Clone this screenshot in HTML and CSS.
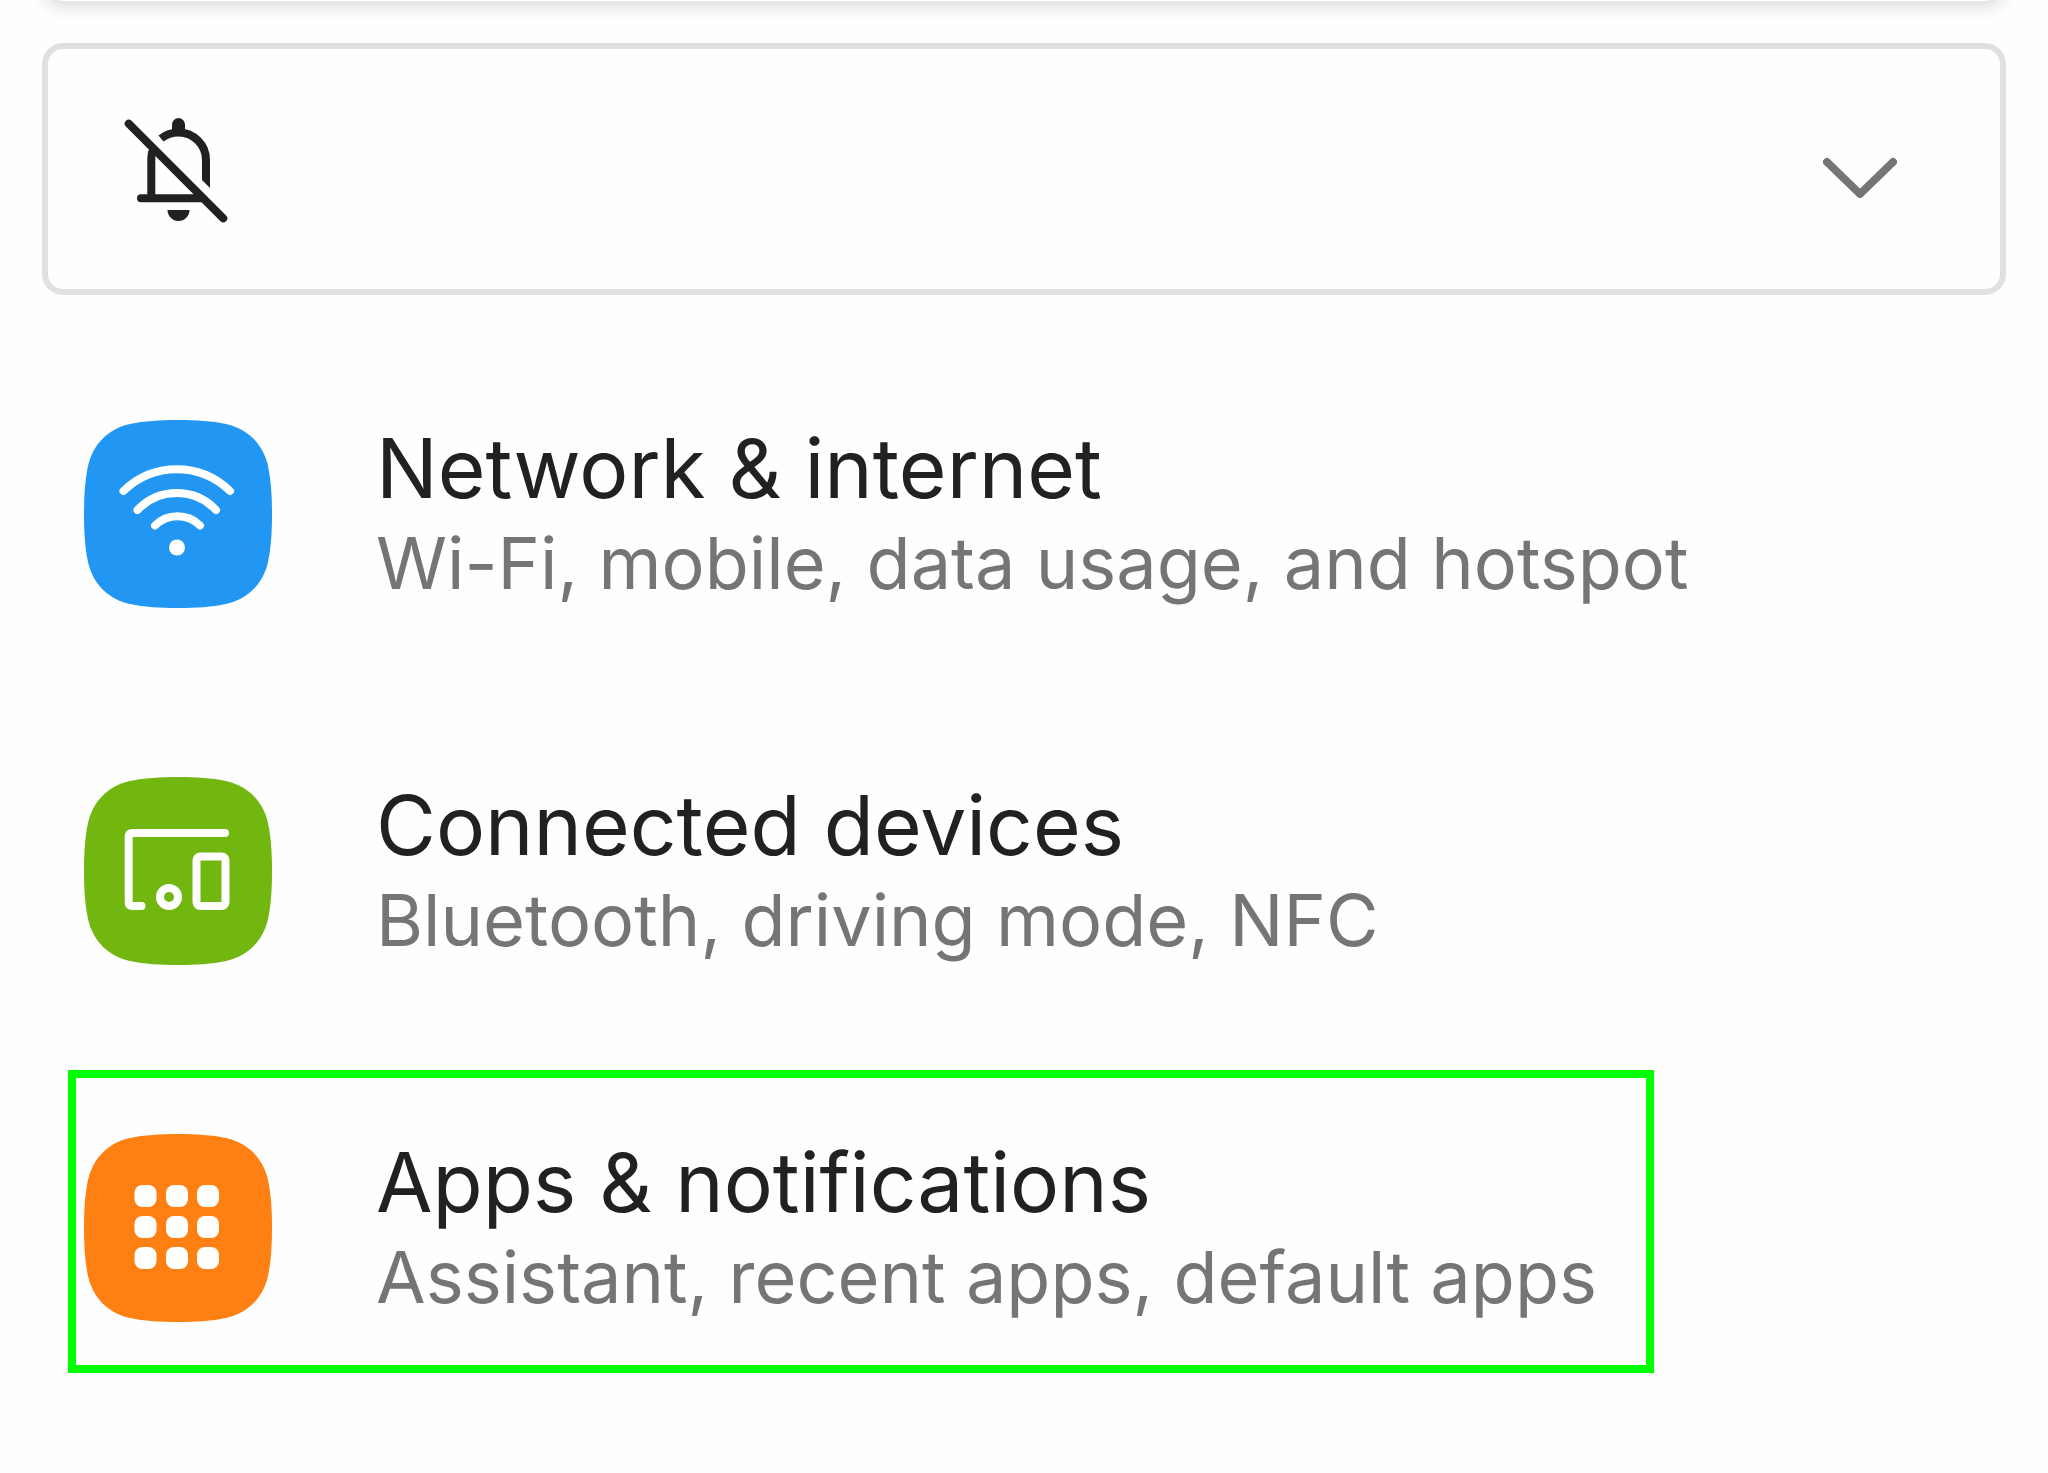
FILE: index.html
```html
<!DOCTYPE html>
<html lang="en">
<head>
<meta charset="utf-8">
<meta name="viewport" content="width=device-width, initial-scale=1">
<title>Settings</title>
<link rel="stylesheet" href="styles.css">
</head>
<body>
<main class="settings">
  <div class="search-card"></div>
  <button class="dnd-card" type="button" aria-label="Do not disturb" aria-expanded="false">
    <svg class="bell" viewBox="120 113 112 112" aria-hidden="true">
      <path class="bell-fill" d="M172 133V124.500a6.500 6.500 0 0 1 13 0V133zM167.500 210h22a11 11 0 0 1-22 0z"/>
      <path class="bell-line" d="M151.300 197V158q0-5 2-9M161 138.500C166 134.500 172 132.500 178.500 132.500C194 132.500 206 145 206 160V178"/>
      <path class="bell-fill" d="M202 176h8v12l-8-8z"/>
      <path class="bell-line round" d="M141 198.300H201M128.700 123.700L223.300 218.300"/>
    </svg>
    <svg class="chevron" viewBox="0 0 74 60" aria-hidden="true"><path d="M4 23L37 55L70 23"/></svg>
  </button>

  <ul class="list">
    <li class="item">
      <a class="row" href="#network">
        <svg class="icon network" viewBox="0 0 188 188" aria-hidden="true">
          <path class="tile" d="M0 94C0 76 1 60 4 46C9 24 24 9 46 4C60 1 76 0 94 0S128 1 142 4C164 9 179 24 184 46C187 60 188 76 188 94S187 128 184 142C179 164 164 179 142 184C128 187 112 188 94 188S60 187 46 184C24 179 9 164 4 142C1 128 0 112 0 94Z"/>
          <path class="glyph" d="M39.500 71A76 76 0 0 1 146 71M53.500 90A54 54 0 0 1 132 90M71 105.500A32 32 0 0 1 116 105.500"/>
          <circle class="solid" cx="93" cy="127.500" r="8"/>
        </svg>
        <span class="text">
          <span class="title">Network &amp; internet</span>
          <span class="summary">Wi-Fi, mobile, data usage, and hotspot</span>
        </span>
      </a>
    </li>
    <li class="item">
      <a class="row" href="#devices">
        <svg class="icon devices" viewBox="0 0 188 188" aria-hidden="true">
          <path class="tile" d="M0 94C0 76 1 60 4 46C9 24 24 9 46 4C60 1 76 0 94 0S128 1 142 4C164 9 179 24 184 46C187 60 188 76 188 94S187 128 184 142C179 164 164 179 142 184C128 187 112 188 94 188S60 187 46 184C24 179 9 164 4 142C1 128 0 112 0 94Z"/>
          <path class="glyph" d="M141 56H48.500Q44.700 56 44.700 60V125Q44.700 129 48.500 129H57.500"/>
          <rect class="glyph" x="112.500" y="79.500" width="29" height="49.500" rx="4"/>
          <circle class="glyph" cx="85" cy="120" r="9"/>
        </svg>
        <span class="text">
          <span class="title">Connected devices</span>
          <span class="summary">Bluetooth, driving mode, NFC</span>
        </span>
      </a>
    </li>
    <li class="item highlighted">
      <a class="row" href="#apps">
        <svg class="icon apps" viewBox="0 0 188 188" aria-hidden="true">
          <path class="tile" d="M0 94C0 76 1 60 4 46C9 24 24 9 46 4C60 1 76 0 94 0S128 1 142 4C164 9 179 24 184 46C187 60 188 76 188 94S187 128 184 142C179 164 164 179 142 184C128 187 112 188 94 188S60 187 46 184C24 179 9 164 4 142C1 128 0 112 0 94Z"/>
          <g class="solid">
            <rect x="50.500" y="51" width="22" height="22" rx="8"/><rect x="82" y="51" width="22" height="22" rx="8"/><rect x="113" y="51" width="22" height="22" rx="8"/>
            <rect x="50.500" y="82" width="22" height="22" rx="8"/><rect x="82" y="82" width="22" height="22" rx="8"/><rect x="113" y="82" width="22" height="22" rx="8"/>
            <rect x="50.500" y="113" width="22" height="22" rx="8"/><rect x="82" y="113" width="22" height="22" rx="8"/><rect x="113" y="113" width="22" height="22" rx="8"/>
          </g>
        </svg>
        <span class="text">
          <span class="title">Apps &amp; notifications</span>
          <span class="summary">Assistant, recent apps, default apps</span>
        </span>
      </a>
    </li>
  </ul>
</main>
</body>
</html>
```
FILE: styles.css
```css
*,
*::after {
  box-sizing: border-box;
}

body {
  margin: 0;
  background: #fefefe;
  color: #212121;
  font-family: Inter, Roboto, sans-serif;
}

.settings {
  display: flex;
  flex-direction: column;
  padding: 0 42px;
  overflow: hidden;
}

.search-card {
  height: 48px;
  margin-top: -44px;
  border: 3px solid #e6e6e6;
  border-radius: 22px;
  background: #fefefe;
  box-shadow: 0 4px 16px rgba(0, 0, 0, 0.12);
}

.dnd-card {
  display: flex;
  align-items: center;
  justify-content: space-between;
  height: 252px;
  margin-top: 39px;
  padding: 0 103px 0 72px;
  border: 6px solid #e0e0e0;
  border-radius: 21px;
  background: #fefefe;
}

.bell {
  width: 112px;
  height: 112px;
}

.bell-fill {
  fill: #212121;
}

.bell-line {
  fill: none;
  stroke: #212121;
  stroke-width: 8;
}

.round {
  stroke-linecap: round;
}

.chevron {
  width: 74px;
  height: 60px;
  fill: none;
  stroke: #757575;
  stroke-width: 8;
  stroke-linecap: round;
  stroke-linejoin: round;
}

.list {
  margin: 40px 0 0;
  padding: 0;
  list-style: none;
}

.item {
  position: relative;
}

.row {
  display: flex;
  align-items: center;
  gap: 104px;
  height: 357px;
  padding: 0 42px;
  color: inherit;
  text-decoration: none;
}

.icon {
  flex: none;
  width: 188px;
  height: 188px;
}

.network .tile {
  fill: #2196f3;
}

.devices .tile {
  fill: #72b710;
}

.apps .tile {
  fill: #ff8012;
}

.glyph {
  fill: none;
  stroke: #fff;
  stroke-width: 8;
  stroke-linecap: round;
}

.solid {
  fill: #fff;
}

.text {
  display: flex;
  flex-direction: column;
  padding-top: 6px;
  white-space: nowrap;
}

.title {
  font-size: 82px;
  line-height: 92px;
}

.summary {
  color: #757575;
  font-size: 72px;
  line-height: 96px;
}

/* Callout frame drawn over the row */
.highlighted::after {
  content: "";
  position: absolute;
  top: 21px;
  left: 26px;
  width: 1586px;
  height: 303px;
  border: 8px solid #00ff00;
  pointer-events: none;
}
```
